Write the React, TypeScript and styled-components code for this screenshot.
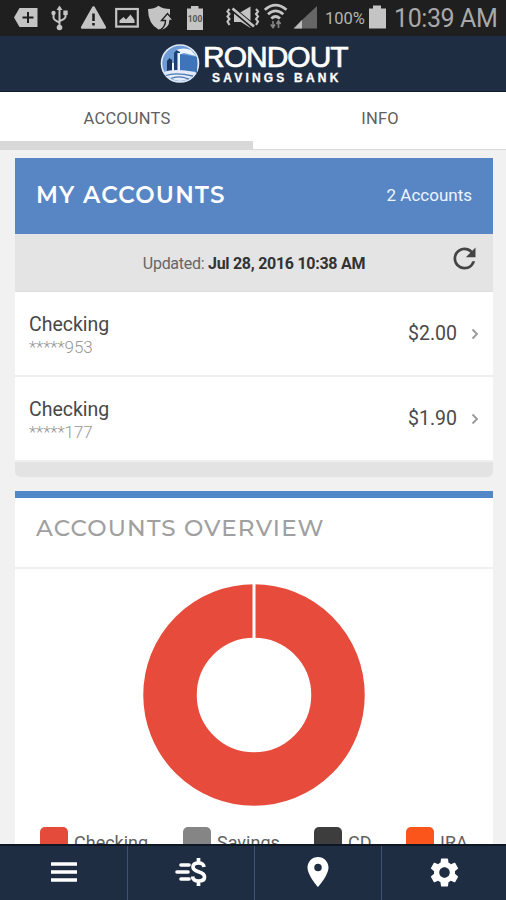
import React from "react";
import styled, { createGlobalStyle } from "styled-components";
import { MdSettings, MdPlace, MdRefresh } from "react-icons/md";

const GlobalStyle = createGlobalStyle`
  * { box-sizing: border-box; }
  html, body { margin: 0; padding: 0; }
  body { background: #f0f0f0; overflow: hidden; font-family: Roboto, "Noto Sans", sans-serif; }
`;

const Screen = styled.div`
  width: 506px;
  height: 900px;
  display: flex;
  flex-direction: column;
  overflow: hidden;
  background: #f1f1f1;
`;

const StatusBar = styled.div`
  height: 36px;
  flex: none;
  display: flex;
  align-items: flex-start;
  background: #1f1f1f;
`;

const StatusIcon = styled.svg<{ $gap: number }>`
  display: block;
  flex: none;
  height: 36px;
  margin-left: ${(p) => p.$gap}px;
`;

const BatteryPercent = styled.span`
  width: 41px;
  margin-left: 7px;
  font-size: 16.5px;
  line-height: 37px;
  color: #b4b4b4;
  white-space: nowrap;
`;

const Clock = styled.span`
  margin-left: 8px;
  font-size: 25px;
  line-height: 37px;
  letter-spacing: -0.4px;
  color: #a9a9a9;
  white-space: nowrap;
`;

const Header = styled.header`
  height: 56px;
  flex: none;
  display: flex;
  justify-content: flex-start;
  padding: 7px 0 0 160px;
  background: #1f2d43;
  border-bottom: 1px solid #141b38;
`;

const Emblem = styled.svg`
  display: block;
  width: 40px;
  height: 42px;
  flex: none;
`;

const Wordmark = styled.div`
  display: flex;
  flex-direction: column;
  margin-left: 3px;
  font-family: "Liberation Sans", Arial, sans-serif;
  color: #ffffff;
  white-space: nowrap;
`;

const WordmarkName = styled.span`
  font-size: 30px;
  line-height: 28px;
  letter-spacing: -1px;
  -webkit-text-stroke: 0.7px #ffffff;
`;

const WordmarkSub = styled.span`
  padding: 1px 0 0 9px;
  font-size: 12px;
  line-height: 12px;
  font-weight: 700;
  letter-spacing: 3.2px;
  -webkit-text-stroke: 0.3px #ffffff;
`;

const Tabs = styled.nav`
  height: 58px;
  flex: none;
  display: flex;
  background: #ffffff;
  border-bottom: 1px solid #d8d8d8;
`;

const Tab = styled.div<{ $active?: boolean }>`
  flex: 1;
  display: flex;
  justify-content: center;
  padding: 17px 0 0 1px;
  font-size: 16.5px;
  line-height: 20px;
  letter-spacing: 0.2px;
  color: #606060;
  border-bottom: ${(p) => (p.$active ? "8px solid #d8d8d8" : "none")};
`;

const Content = styled.main`
  flex: 1;
  min-height: 0;
  overflow: hidden;
  display: flex;
  flex-direction: column;
  gap: 14px;
  padding: 8px 13px 0 15px;
`;

const Card = styled.section<{ $accent?: boolean }>`
  flex: none;
  background: #ffffff;
  border-top: ${(p) => (p.$accent ? "7px solid #5187c6" : "none")};
  border-radius: ${(p) => (p.$accent ? "0" : "0 0 5px 5px")};
  overflow: hidden;
`;

const BlueHeading = styled.div`
  height: 76px;
  display: flex;
  align-items: center;
  justify-content: space-between;
  padding: 0 21px 2px;
  background: #5886c5;
  color: #ffffff;
`;

const Title = styled.h2<{ $muted?: boolean }>`
  margin: 0;
  font-family: Montserrat, Lato, sans-serif;
  font-size: 23px;
  line-height: 30px;
  font-weight: ${(p) => (p.$muted ? 500 : 600)};
  letter-spacing: ${(p) => (p.$muted ? 1.15 : 1.25)}px;
  color: ${(p) => (p.$muted ? "#a0a0a0" : "#ffffff")};
  white-space: nowrap;
`;

const Count = styled.span`
  font-size: 17px;
  line-height: 24px;
  margin-bottom: 1px;
  color: #edf4ff;
`;

const UpdateBar = styled.div`
  height: 58px;
  display: grid;
  grid-template-columns: 1fr auto 1fr;
  align-items: center;
  padding-right: 12px;
  background: #e4e4e4;
  border-bottom: 1px solid #dddddd;
  font-size: 16px;
  color: #666666;

  b { color: #333333; font-weight: 700; }
  svg { justify-self: end; margin-bottom: 8px; }
`;

const UpdateText = styled.span`
  grid-column: 2;
  margin: 2px -12px 0 0;
  letter-spacing: -0.28px;
  white-space: nowrap;
`;

const AccountRow = styled.div`
  height: 85px;
  display: flex;
  align-items: center;
  padding: 1px 14px 0 14px;
  border-bottom: 2px solid #eeeeee;
`;

const AccountInfo = styled.div`
  flex: 1;
  display: flex;
  flex-direction: column;
  padding-top: 2px;
`;

const AccountName = styled.span`
  font-size: 19.5px;
  line-height: 24px;
  color: #484848;
`;

const AccountNumber = styled.span`
  font-size: 17px;
  line-height: 21px;
  font-weight: 300;
  letter-spacing: -0.1px;
  color: #969696;
`;

const Amount = styled.span`
  font-size: 19.5px;
  line-height: 24px;
  color: #4a4a4a;
`;

const Chevron = styled.svg`
  display: block;
  margin-left: 14px;
`;

const CardFooter = styled.div`
  height: 15px;
  background: #e3e3e3;
`;

const OverviewHeading = styled.div`
  height: 71px;
  padding: 15px 21px 0;
  border-bottom: 2px solid #f0f0f0;
`;

const ChartArea = styled.div`
  display: flex;
  justify-content: center;
  padding-top: 15px;
`;

const Legend = styled.div`
  display: flex;
  padding: 21px 0 20px 25px;
`;

const LegendItem = styled.div<{ $width: number }>`
  width: ${(p) => p.$width}px;
  flex: none;
  display: flex;
  gap: 6px;
  font-size: 18px;
  line-height: 31px;
  color: #606060;
`;

const Swatch = styled.span<{ $color: string }>`
  width: 28px;
  height: 28px;
  border-radius: 5px;
  background: ${(p) => p.$color};
`;

const BottomNav = styled.nav`
  height: 56px;
  flex: none;
  display: flex;
  background: #1f2d43;
  border-top: 2px solid #101724;
`;

const NavButton = styled.div`
  flex: 0 0 127px;
  display: flex;
  align-items: center;
  justify-content: center;
  padding-bottom: 2px;
  color: #ffffff;

  & + & { border-left: 1px solid #3b5277; }
  &:last-child { flex: 1; }
`;

const ACCOUNTS = [
  { name: "Checking", number: "*****953", amount: "$2.00" },
  { name: "Checking", number: "*****177", amount: "$1.90" },
];

const LEGEND = [
  { label: "Checking", color: "#e44b3b", width: 143 },
  { label: "Savings", color: "#858585", width: 131 },
  { label: "CD", color: "#3d3d3d", width: 92 },
  { label: "IRA", color: "#fb551c", width: 70 },
];

const G = "#c4c4c4";
const D = "#1f1f1f";

function StatusIcons() {
  return (
    <>
      <StatusIcon $gap={14} width="24" viewBox="14 0 24 36">
        <path d="M14 17.5L19.5 8H37.5V27H19.5Z" fill={G} />
        <path d="M28 12V23M22.5 17.5H33.5" stroke={D} strokeWidth="2" />
      </StatusIcon>
      <StatusIcon $gap={13} width="17" viewBox="51 0 17 36" fill="none" stroke={G} strokeWidth="2">
        <path d="M59.5 9V27M53.5 13V17.5Q53.5 20 59.5 22.5M65.5 13V16.5Q65.5 19 59.5 21" />
        <path d="M56.5 10L59.5 5.5L62.5 10Z" fill={G} stroke="none" />
        <circle cx="59.5" cy="27.5" r="2.8" fill={G} stroke="none" />
        <circle cx="53.5" cy="13" r="2.2" fill={G} stroke="none" />
        <path d="M63.3 10.5H67.7V15H63.3Z" fill={G} stroke="none" />
      </StatusIcon>
      <StatusIcon $gap={12} width="27" viewBox="80 0 27 36">
        <path d="M93.5 7.5L104.8 27.5H82.2Z" fill={G} stroke={G} strokeWidth="2.6" strokeLinejoin="round" />
        <path d="M93.5 13.5V21M93.5 23V25.5" stroke={D} strokeWidth="2.6" />
      </StatusIcon>
      <StatusIcon $gap={8} width="24" viewBox="115 0 24 36">
        <rect x="116.2" y="9" width="21.6" height="17.6" fill="none" stroke={G} strokeWidth="2.2" />
        <path d="M119.5 23V20.5L123.5 17L126 19.5L130.5 14.5L134.5 20V23Z" fill={G} />
      </StatusIcon>
      <StatusIcon $gap={8} width="27" viewBox="147 0 27 36">
        <path d="M148 9Q154 9 158.5 5.8Q163 9 170 9V16Q167 22 164 28Q161 30 158.5 29.5Q148 24 148 9Z" fill={G} />
        <path d="M160 30Q165.500 27 165.500 20.500H161.500L167.500 13.500L173.500 20.500H170Q170 28 162 30.500Z" fill={G} stroke={D} strokeWidth="1.400" />
      </StatusIcon>
      <StatusIcon $gap={12} width="18" viewBox="186 0 18 36">
        <path d="M187 8.5H191V6H198.500V8.500H203V30H187Z" fill={G} />
        <text x="195" y="21.800" fontSize="8.500" fontWeight="700" textAnchor="middle" fill="#555" fontFamily="Roboto">100</text>
      </StatusIcon>
      <StatusIcon $gap={22} width="34" viewBox="226 0 34 36" fill="none" stroke={G} strokeWidth="2.100">
        <path d="M229.500 9L227.500 11.500L229.500 14L227.500 16.500L229.500 19L227.500 21.500L229.500 25M256 9L258 11.500L256 14L258 16.500L256 19L258 21.500L256 25" />
        <path d="M234 12H241L250.500 6.500V28L241 22H234Z" fill={G} stroke="none" />
        <path d="M232 8.500L254 27" stroke={D} strokeWidth="5" />
        <path d="M232.500 8.500L254 26.500" strokeWidth="2.600" />
      </StatusIcon>
      <StatusIcon $gap={4} width="24" viewBox="264 0 24 36" fill="none" stroke={G} strokeWidth="2.700">
        <path d="M264.800 9.800Q275.500 0.500 286.500 9.800M268 14.200Q275.500 7.500 283.300 14.200M271.300 18.500Q275.500 14.500 280 18.500" />
        <path d="M273 21V27M270.800 24.500L273 27.500L275 24.500M278.500 28V21.500M276.400 24L278.500 21L280.600 24" stroke="#858585" strokeWidth="1.600" />
      </StatusIcon>
      <StatusIcon $gap={5} width="25" viewBox="293 0 25 36">
        <path d="M293 28.500L317 6V28.500Z" fill="#666" />
        <path d="M294 28.500L302 20V28.500Z" fill="#bdbdbd" />
      </StatusIcon>
      <BatteryPercent>100%</BatteryPercent>
      <StatusIcon $gap={2} width="18" viewBox="367 0 18 36">
        <path d="M368 8.500H372V5.500H380V8.500H385V28.500H368Z" fill={G} />
      </StatusIcon>
      <Clock>10:39 AM</Clock>
    </>
  );
}

function BankEmblem() {
  return (
    <Emblem viewBox="160 43 40 42">
      <circle cx="180" cy="63.500" r="18.500" fill="#6d9bd6" stroke="#dfe9f7" strokeWidth="1.600" />
      <path d="M176 50Q184 47 191 50L196 56L184 53L178 55Z" fill="#eef4fc" />
      <path d="M180 54L197 57V73L180 70Z" fill="#3f74bb" />
      <path d="M174 53L176.500 50L180 52V73H174Z" fill="#1c3f78" />
      <path d="M177.500 53V72H180V53Z" fill="#eef4fc" />
      <path d="M167 61L169.500 58L172 60V73H167Z" fill="#1c3560" />
      <path d="M172 63H174V72H172Z" fill="#eef4fc" />
      <path d="M164 72Q173 68 196 72Q191 80 180 81Q169 80 164 72Z" fill="#e3ecf8" />
      <path d="M166 75.500Q175 72 193 76M171 78.500Q178 75 189 79" stroke="#4c79b4" strokeWidth="1.300" fill="none" />
    </Emblem>
  );
}

export default function App() {
  return (
    <Screen>
      <GlobalStyle />
      <StatusBar>
        <StatusIcons />
      </StatusBar>
      <Header>
        <BankEmblem />
        <Wordmark>
          <WordmarkName>RONDOUT</WordmarkName>
          <WordmarkSub>SAVINGS BANK</WordmarkSub>
        </Wordmark>
      </Header>
      <Tabs>
        <Tab $active>ACCOUNTS</Tab>
        <Tab>INFO</Tab>
      </Tabs>
      <Content>
        <Card>
          <BlueHeading>
            <Title>MY ACCOUNTS</Title>
            <Count>2 Accounts</Count>
          </BlueHeading>
          <UpdateBar>
            <UpdateText>
              Updated: <b>Jul 28, 2016 10:38 AM</b>
            </UpdateText>
            <MdRefresh size={33} color="#444" />
          </UpdateBar>
          {ACCOUNTS.map((a) => (
            <AccountRow key={a.number}>
              <AccountInfo>
                <AccountName>{a.name}</AccountName>
                <AccountNumber>{a.number}</AccountNumber>
              </AccountInfo>
              <Amount>{a.amount}</Amount>
              <Chevron width="8" height="12" viewBox="0 0 8 12">
                <path d="M1.500 1.500L6 6L1.500 10.500" fill="none" stroke="#999" strokeWidth="1.800" />
              </Chevron>
            </AccountRow>
          ))}
          <CardFooter />
        </Card>
        <Card $accent>
          <OverviewHeading>
            <Title $muted>ACCOUNTS OVERVIEW</Title>
          </OverviewHeading>
          <ChartArea>
            <svg width="222" height="222" viewBox="0 0 222 222">
              <circle cx="111" cy="111" r="84" fill="none" stroke="#e64b3b" strokeWidth="53.500" />
              <path d="M111 0V56" stroke="#fff" strokeWidth="3" />
            </svg>
          </ChartArea>
          <Legend>
            {LEGEND.map((l) => (
              <LegendItem key={l.label} $width={l.width}>
                <Swatch $color={l.color} />
                {l.label}
              </LegendItem>
            ))}
          </Legend>
        </Card>
      </Content>
      <BottomNav>
        <NavButton>
          <svg width="28" height="20" viewBox="0 0 28 20">
            <path d="M1 2H27M1 10H27M1 18H27" stroke="#fff" strokeWidth="3.600" />
          </svg>
        </NavButton>
        <NavButton>
          <svg width="32" height="30" viewBox="0 0 32 30" fill="none" stroke="#fff" strokeWidth="3">
            <path d="M6 8H14M2 15H13M6 22H14" strokeWidth="3.600" strokeLinecap="round" />
            <path d="M29 10Q28.500 6 23.500 6Q18 6 18 10Q18 13 23.500 14.700Q29.500 16.500 29.500 20Q29.500 24 23.500 24Q18 24 17.500 19.500M23.500 1V6M23.500 24V29" strokeWidth="3.700" />
          </svg>
        </NavButton>
        <NavButton>
          <MdPlace size={36} />
        </NavButton>
        <NavButton>
          <MdSettings size={35} />
        </NavButton>
      </BottomNav>
    </Screen>
  );
}
